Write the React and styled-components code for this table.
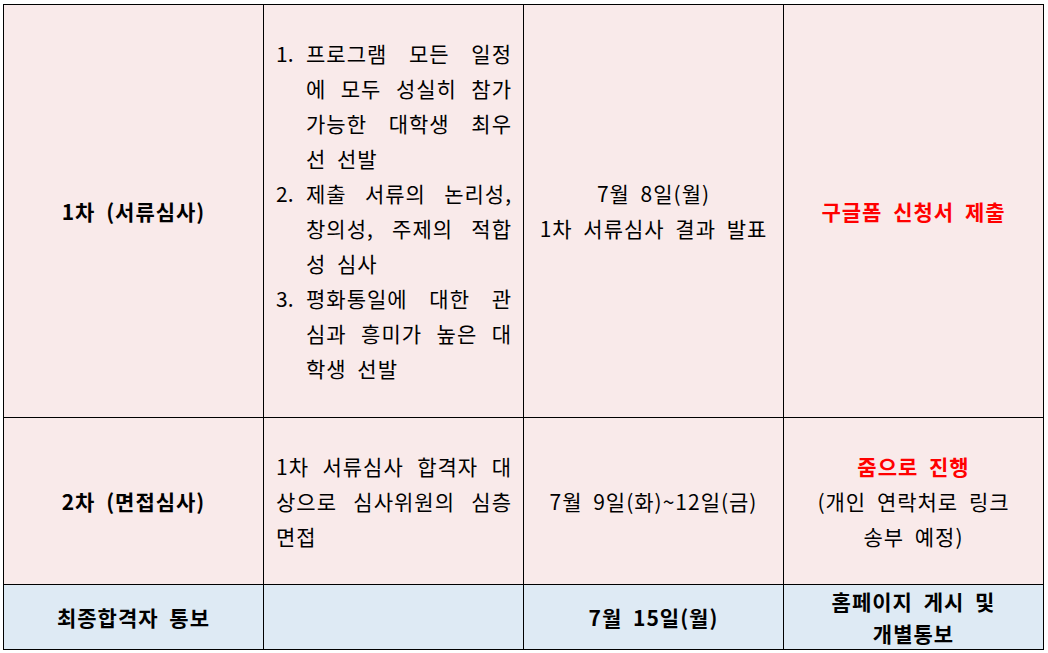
import React from 'react'
import styled, { createGlobalStyle } from 'styled-components'

const GlobalStyle = createGlobalStyle`
  body {
    margin: 0;
    background: #ffffff;
    font-family: "Noto Sans CJK KR", "Noto Sans", sans-serif;
    color: #000000;
  }
`

const Table = styled.table`
  border-collapse: collapse;
  table-layout: fixed;
  width: 1041px;
  margin: 4px 0 0 3px;
  font-size: 21px;
  letter-spacing: 1px;
  word-spacing: 5px;
`

const Row = styled.tr`
  height: ${props => props.$height}px;
  background-color: ${props => (props.$tone === 'blue' ? '#deeaf4' : '#f9eaea')};
`

const Cell = styled.td`
  width: 260px;
  border: 1px solid #000000;
  padding: 0 12px;
  vertical-align: middle;
  text-align: center;
  line-height: ${props => props.$lineHeight || 35}px;
  font-weight: ${props => (props.$bold ? 700 : 400)};
  box-sizing: border-box;
`

const Red = styled.span`
  display: block;
  color: #ff0000;
  font-weight: 700;
`

const List = styled.div`
  display: flex;
  flex-direction: column;
  text-align: left;
`

const Item = styled.div`
  display: flex;
`

const Marker = styled.span`
  flex: 0 0 30px;
  letter-spacing: 0;
`

const ItemBody = styled.div`
  flex: 1;
`

const Line = styled.span`
  display: block;
  text-align: ${props => (props.$justify ? 'justify' : 'left')};
  text-align-last: ${props => (props.$justify ? 'justify' : 'left')};
  white-space: nowrap;
  margin-right: ${props => (props.$justify ? -1 : 0)}px;
`

const criteria = [
  ['프로그램 모든 일정', '에 모두 성실히 참가', '가능한 대학생 최우', '선 선발'],
  ['제출 서류의 논리성,', '창의성, 주제의 적합', '성 심사'],
  ['평화통일에 대한 관', '심과 흥미가 높은 대', '학생 선발']
]

const interviewLines = ['1차 서류심사 합격자 대', '상으로 심사위원의 심층', '면접']

const JustifiedLines = ({ lines }) =>
  lines.map((text, i) => (
    <Line key={i} $justify={i < lines.length - 1}>
      {text}
    </Line>
  ))

export default function App() {
  return (
    <>
      <GlobalStyle />
      <Table>
        <tbody>
          <Row $height={413}>
            <Cell $bold>1차 (서류심사)</Cell>
            <Cell>
              <List>
                {criteria.map((lines, i) => (
                  <Item key={i}>
                    <Marker>{i + 1}.</Marker>
                    <ItemBody>
                      <JustifiedLines lines={lines} />
                    </ItemBody>
                  </Item>
                ))}
              </List>
            </Cell>
            <Cell>
              7월 8일(월)
              <br />
              1차 서류심사 결과 발표
            </Cell>
            <Cell>
              <Red>구글폼 신청서 제출</Red>
            </Cell>
          </Row>
          <Row $height={167}>
            <Cell $bold>2차 (면접심사)</Cell>
            <Cell>
              <List>
                <JustifiedLines lines={interviewLines} />
              </List>
            </Cell>
            <Cell>7월 9일(화)~12일(금)</Cell>
            <Cell>
              <Red>줌으로 진행</Red>
              (개인 연락처로 링크
              <br />
              송부 예정)
            </Cell>
          </Row>
          <Row $height={63} $tone="blue">
            <Cell $bold>최종합격자 통보</Cell>
            <Cell />
            <Cell $bold>7월 15일(월)</Cell>
            <Cell $bold $lineHeight={32}>
              홈페이지 게시 및
              <br />
              개별통보
            </Cell>
          </Row>
        </tbody>
      </Table>
    </>
  )
}
